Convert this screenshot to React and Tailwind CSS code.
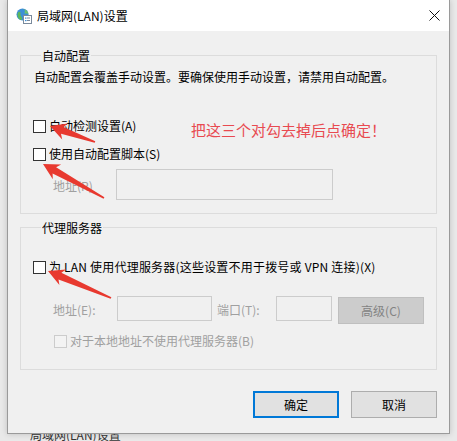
import React from "react";

const FONT = { fontFamily: '"Noto Sans CJK SC", "Microsoft YaHei", sans-serif' };

function arrowPoints(tx, ty, sx, sy) {
  const dx = tx - sx, dy = ty - sy;
  const len = Math.hypot(dx, dy);
  const ux = dx / len, uy = dy / len;
  const nx = -uy, ny = ux;
  const L = 16, hw = 8.5, sw = 3.6, tw = 0.9, back = 3;
  const bx = tx - ux * L, by = ty - uy * L;
  const cx = tx - ux * (L - back), cy = ty - uy * (L - back);
  const p = (x, y) => `${x.toFixed(1)},${y.toFixed(1)}`;
  return [
    p(sx + nx * tw, sy + ny * tw),
    p(cx + nx * sw, cy + ny * sw),
    p(bx + nx * hw, by + ny * hw),
    p(tx, ty),
    p(bx - nx * hw, by - ny * hw),
    p(cx - nx * sw, cy - ny * sw),
    p(sx - nx * tw, sy - ny * tw),
  ].join(" ");
}

function CheckRow({ label, disabled, wide }) {
  return (
    <div className="flex h-[16px] items-center">
      <div
        className={
          "h-[13px] w-[13px] shrink-0 border " +
          (disabled ? "border-[#cccccc] bg-[#f3f3f3]" : "border-[#333333] bg-white")
        }
      />
      <span
        className={
          "ml-[3px] whitespace-nowrap text-[12px] leading-[16px] " +
          (disabled ? "text-[#a0a0a0]" : "text-black") +
          (wide ? " tracking-[0.2px]" : "")
        }
      >
        {label}
      </span>
    </div>
  );
}

function GroupLabel({ children }) {
  return (
    <div className="-mt-[8px] ml-[8px] h-[16px] text-[12px] leading-[16px] text-black">
      <span className="bg-[#f0f0f0] px-[1px]">{children}</span>
    </div>
  );
}

export default function App() {
  return (
    <div className="relative h-[441px] w-[457px] overflow-hidden bg-[#e9e9e9]" style={FONT}>
      <div className="ml-[7px] flex h-[434px] w-[443px] flex-col border border-t-0 border-[#9a9a9a] bg-[#f0f0f0] shadow-[0_0_6px_rgba(0,0,0,0.18)]">
        {/* title bar */}
        <div className="flex h-[31px] shrink-0 items-center bg-white pl-[8px] pr-[9px]">
          <svg width="16" height="16" viewBox="0 0 16 16" className="shrink-0">
            <circle cx="6.5" cy="6.5" r="6" fill="#3d8fd6" />
            <path d="M2 4.5 C3.5 3 5 4 4.5 6 C4 7.5 5.5 8.5 6 10 C6.3 11 5.5 12 4.5 12 C2.5 10.8 1.2 8.5 1.5 6 Z" fill="#5cb85c" />
            <path d="M7.5 1.2 C9 2 9.5 3.5 8.5 4.5 C8 5 9 6 10.5 5.5 C11.5 5.2 12.4 6 12.5 7 C12.8 4 10.5 1.5 7.5 1.2 Z" fill="#6cc070" />
            <rect x="7.5" y="7.5" width="8" height="8" fill="#ffffff" stroke="#7a8a9c" strokeWidth="1" />
            <rect x="9" y="9.5" width="1.5" height="1.2" fill="#3d8fd6" />
            <rect x="11" y="9.5" width="3" height="1" fill="#7a8a9c" />
            <rect x="9" y="12" width="1.5" height="1.2" fill="#3d8fd6" />
            <rect x="11" y="12" width="3" height="1" fill="#7a8a9c" />
          </svg>
          <span className="ml-[5px] text-[12px] leading-[16px] text-black">局域网(LAN)设置</span>
          <div className="flex-1" />
          <svg width="11" height="11" viewBox="0 0 11 11" className="mb-[1px]">
            <path d="M0.5 0.5 L10.5 10.5 M10.5 0.5 L0.5 10.5" stroke="#111" strokeWidth="1" />
          </svg>
        </div>

        {/* body */}
        <div className="flex flex-1 flex-col px-[12px]">
          {/* group 1 */}
          <div className="mt-[24px] border border-[#dcdcdc] pb-[13px] pl-[12px]">
            <GroupLabel>自动配置</GroupLabel>
            <div className="ml-[1px] mt-[5px] text-[12px] leading-[16px] text-black">
              自动配置会覆盖手动设置。要确保使用手动设置，请禁用自动配置。
            </div>
            <div className="mt-[33px]">
              <CheckRow label="自动检测设置(A)" />
            </div>
            <div className="mt-[12px]">
              <CheckRow label="使用自动配置脚本(S)" />
            </div>
            <div className="mt-[7px] flex items-center">
              <span className="ml-[20px] w-[63px] pt-[3px] text-[12px] leading-[16px] text-[#a0a0a0]">地址(R)</span>
              <div className="h-[31px] w-[217px] border border-[#cccccc] bg-[#f0f0f0]" />
            </div>
          </div>

          {/* group 2 */}
          <div className="mt-[13px] border border-[#dcdcdc] pb-[20px] pl-[12px]">
            <GroupLabel>代理服务器</GroupLabel>
            <div className="mt-[23px]">
              <CheckRow label="为 LAN 使用代理服务器(这些设置不用于拨号或 VPN 连接)(X)" wide />
            </div>
            <div className="mt-[21px] flex items-start">
              <span className="ml-[20px] w-[64px] text-[12px] leading-[27px] text-[#a0a0a0]">地址(E):</span>
              <div className="h-[25px] w-[95px] border border-[#cccccc] bg-[#f0f0f0]" />
              <span className="ml-[5px] w-[59px] text-[12px] leading-[27px] text-[#a0a0a0]">端口(T):</span>
              <div className="h-[25px] w-[56px] border border-[#cccccc] bg-[#f0f0f0]" />
              <div className="ml-[6px] mt-[1px] flex h-[27px] w-[86px] items-center justify-center border border-[#bfbfbf] bg-[#cccccc] text-[12px] text-[#838383]">
                高级(C)
              </div>
            </div>
            <div className="ml-[21px] mt-[9px]">
              <CheckRow label="对于本地地址不使用代理服务器(B)" disabled />
            </div>
          </div>

          {/* buttons */}
          <div className="mt-[21px] flex justify-end gap-[12px]">
            <div className="flex h-[27px] w-[86px] items-center justify-center border-2 border-[#0078d7] bg-[#e1e1e1] text-[12px] text-black">
              确定
            </div>
            <div className="flex h-[27px] w-[86px] items-center justify-center border border-[#adadad] bg-[#e1e1e1] text-[12px] text-black">
              取消
            </div>
          </div>
        </div>
      </div>

      {/* background window title peeking below */}
      <div className="h-[7px] overflow-hidden pl-[30px]">
        <div className="-mt-[7px] text-[12px] leading-[16px] text-[#333]">局域网(LAN)设置</div>
      </div>

      {/* annotation text */}
      <div className="absolute left-[191px] top-[120px] whitespace-nowrap text-[15px] leading-[20px] text-[#e84a50]">
        把这三个对勾去掉后点确定！
      </div>

      {/* annotation arrows */}
      <svg className="pointer-events-none absolute left-0 top-0" width="457" height="441">
        <polygon points={arrowPoints(50, 126, 95, 142)} fill="#e8392f" />
        <polygon points={arrowPoints(43, 164, 104, 198)} fill="#e8392f" />
        <polygon points={arrowPoints(48, 271, 111, 298)} fill="#e8392f" />
      </svg>
    </div>
  );
}
